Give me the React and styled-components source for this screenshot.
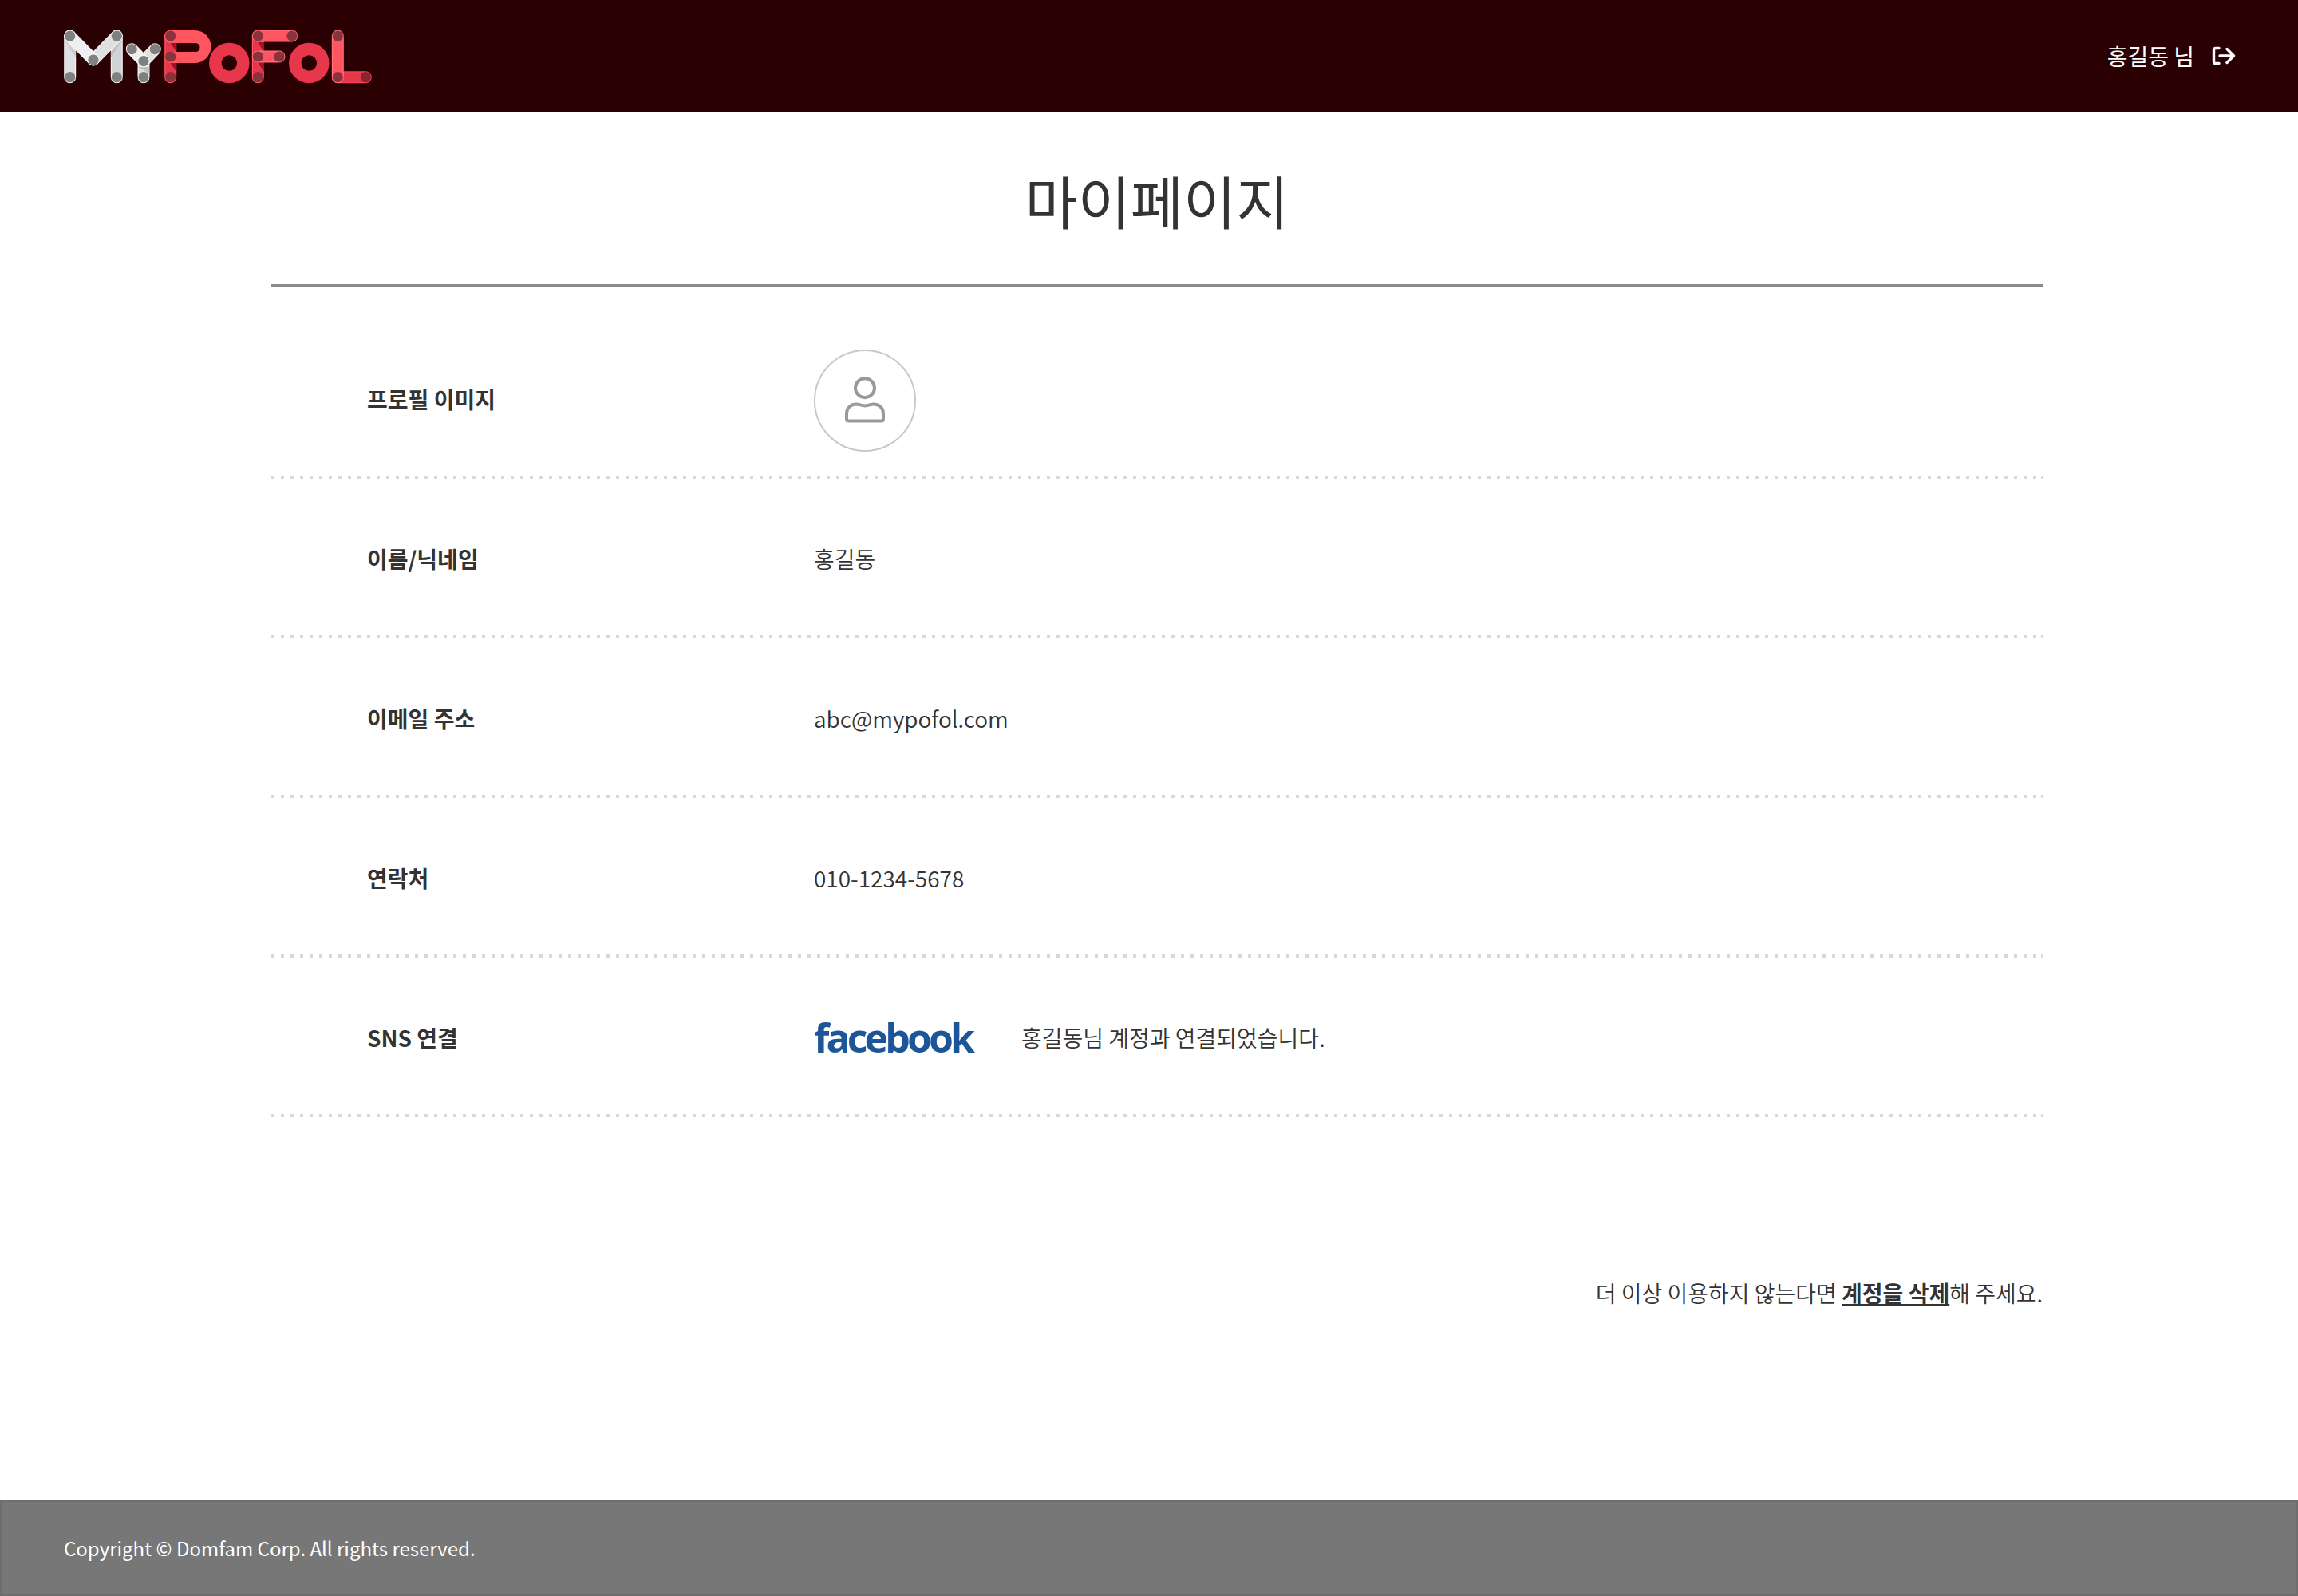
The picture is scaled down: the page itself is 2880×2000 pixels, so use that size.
import React from 'react'
import styled, { createGlobalStyle } from 'styled-components'

const GlobalStyle = createGlobalStyle`
  html, body {
    margin: 0;
    padding: 0;
    background: #fff;
  }
  body {
    font-family: "Noto Sans CJK KR", "Noto Sans", sans-serif;
    font-size: 28px;
    color: #333;
  }
`

const Page = styled.div`
  display: flex;
  flex-direction: column;
  min-height: 2000px;
`

const Header = styled.header`
  display: flex;
  align-items: center;
  justify-content: space-between;
  height: 140px;
  padding: 0 78px;
  box-sizing: border-box;
  background: #2b0002;
`

const UserBox = styled.div`
  display: flex;
  align-items: center;
  gap: 22px;
  color: #fff;
  font-weight: 400;
  line-height: 40px;
`

const Main = styled.main`
  flex: 1;
  padding: 0 320px 0 340px;
`

const Title = styled.h1`
  margin: 0;
  height: 216px;
  padding-top: 64px;
  box-sizing: border-box;
  text-align: center;
  font-size: 72px;
  font-weight: 400;
  line-height: 92px;
  color: #333;
`

const Rule = styled.div`
  height: 4px;
  background: #8c8c8c;
`

const List = styled.div`
  padding-top: 40px;
`

const Row = styled.div`
  display: flex;
  align-items: center;
  height: 200px;
  padding-left: 120px;
  box-sizing: border-box;
  background:
    linear-gradient(#d8d8d8, #d8d8d8) right bottom / 2px 4px no-repeat,
    linear-gradient(to right, #d8d8d8 4px, transparent 4px) left bottom / 12px 4px repeat-x;
`

const Label = styled.div`
  width: 560px;
  font-weight: 700;
  color: #333;
`

const Value = styled.div`
  display: flex;
  align-items: center;
  font-weight: 350;
  color: #333;
`

const Avatar = styled.div`
  display: flex;
  align-items: center;
  justify-content: center;
  width: 128px;
  height: 128px;
  margin-top: 3px;
  box-sizing: border-box;
  border: 2px solid #c8c8c8;
  border-radius: 50%;
`

const FacebookMark = styled.span`
  width: 200px;
  margin-right: 60px;
  font-family: "Open Sans", sans-serif;
  font-size: 50px;
  font-weight: 700;
  line-height: 60px;
  letter-spacing: -3.9px;
  color: #1d5599;
`

const Leave = styled.p`
  margin: 200px 0 0;
  text-align: right;
  font-weight: 350;
  line-height: 40px;
`

const DeleteLink = styled.a`
  font-weight: 700;
  color: #333;
  text-decoration: underline;
`

const Footer = styled.footer`
  display: flex;
  align-items: center;
  height: 120px;
  padding: 0 0 2px 78px;
  box-sizing: border-box;
  border: 2px solid #6e6e6e;
  background: #777;
  color: #fff;
  font-size: 24px;
  font-weight: 400;
`

const Rod = ({ x1, y1, x2, y2, fill, edge }) => (
  <g strokeLinecap="round">
    <line x1={x1} y1={y1} x2={x2} y2={y2} stroke={edge} strokeWidth="15" />
    <line x1={x1} y1={y1} x2={x2} y2={y2} stroke={fill} strokeWidth="12.5" />
  </g>
)

const Pins = ({ points, fill, r = 6.6 }) => (
  <g fill={fill}>
    {points.map(([cx, cy]) => (
      <circle key={`${cx}-${cy}`} cx={cx} cy={cy} r={r} />
    ))}
  </g>
)

const Ring = ({ cx }) => (
  <circle cx={cx} cy="79" r="17.5" fill="none" stroke="#e8364a" strokeWidth="15.5" />
)

const Logo = () => (
  <svg width="392" height="70" viewBox="78 35 392 70" role="img" aria-label="MyPoFoL">
    {/* M */}
    <Rod x1={87.7} y1={45} x2={87.7} y2={96.7} fill="#dfe0e2" edge="#f4f4f5" />
    <Rod x1={146.3} y1={45} x2={146.3} y2={96.7} fill="#d2d3d5" edge="#f0f0f1" />
    <polygon points="80.5,50 95,65 95,72" fill="#c9cacc" />
    <polygon points="153.5,50 139,65 139,72" fill="#bfc0c2" />
    <Rod x1={146.3} y1={45} x2={117} y2={75} fill="#dfe0e2" edge="#f0f0f1" />
    <Rod x1={87.7} y1={45} x2={117} y2={75} fill="#eeeff1" edge="#f8f8f9" />
    <Pins fill="#808080" points={[[87.7, 45], [146.3, 45], [117, 75], [87.7, 96.7], [146.3, 96.7]]} />
    {/* y */}
    <Rod x1={180} y1={76.7} x2={180} y2={96.7} fill="#dfe0e2" edge="#f0f0f1" />
    <polygon points="173,84 187,84 187,92" fill="#bfc0c2" />
    <Rod x1={194.3} y1={61.7} x2={180} y2={76.7} fill="#dfe0e2" edge="#f0f0f1" />
    <Rod x1={165.3} y1={61.7} x2={180} y2={76.7} fill="#eeeff1" edge="#f8f8f9" />
    <Pins fill="#808080" points={[[165.3, 61.7], [194.3, 61.7], [180, 76.7], [180, 96.7]]} />
    {/* P */}
    <Rod x1={213.7} y1={45} x2={213.7} y2={96.7} fill="#e8364a" edge="#ff5560" />
    <polygon points="213,53 221,53 221,65" fill="#a50f28" />
    <polygon points="213,78 221,78 221,90" fill="#a50f28" />
    <path
      d="M213.7 38 H244 a20.5 20.5 0 0 1 0 41 H213.7 a7 7 0 0 1 0 -14 H245 a5.5 5.5 0 0 0 0 -11 H213.7 a8 8 0 0 1 0 -16 z"
      fill="#ff5560"
    />
    <Pins fill="#8a333c" points={[[213.7, 45], [213.7, 71], [213.7, 96.7]]} />
    {/* o */}
    <Ring cx={287.3} />
    {/* F */}
    <Rod x1={323.3} y1={45} x2={323.3} y2={96.7} fill="#e8364a" edge="#ff5560" />
    <polygon points="323,53 331,53 331,65" fill="#a50f28" />
    <polygon points="323,78 331,78 331,90" fill="#a50f28" />
    <Rod x1={323.3} y1={45} x2={366} y2={45} fill="#ff5560" edge="#ff7078" />
    <Rod x1={323.3} y1={71} x2={350} y2={71} fill="#ff5560" edge="#ff7078" />
    <Pins fill="#8a333c" points={[[323.3, 45], [366, 45], [323.3, 71], [350, 71], [323.3, 96.7]]} />
    {/* o */}
    <Ring cx={387.3} />
    {/* L */}
    <Rod x1={423.3} y1={96.7} x2={458.3} y2={96.7} fill="#e8364a" edge="#ee4455" />
    <Rod x1={423.3} y1={45} x2={423.3} y2={96.7} fill="#ff5560" edge="#ff7078" />
    <Pins fill="#8a333c" points={[[423.3, 45], [423.3, 96.7]]} />
    <Pins fill="#85252f" points={[[458.3, 96.7]]} />
  </svg>
)

const LogoutIcon = () => (
  <svg width="30" height="24" viewBox="0 0 30 24" fill="none" stroke="#fff" strokeWidth="3.4" strokeLinecap="round" strokeLinejoin="round">
    <path d="M9 2.5H4.5a2 2 0 0 0-2 2v15a2 2 0 0 0 2 2H9" />
    <path d="M10 12h17M19 3.5l8.5 8.5-8.5 8.5" />
  </svg>
)

const PersonIcon = () => (
  <svg width="56" height="60" viewBox="0 0 56 60" fill="none" stroke="#999" strokeWidth="4" strokeLinejoin="round">
    <circle cx="28" cy="14.2" r="12" />
    <path d="M5 53v-7C5 39.500 10 34.500 17 34.500c4 0 6.500 2 11 2s7-2 11-2C46 34.500 51 39.500 51 46v7c0 1.500-1 2.500-2.500 2.500h-41C6 55.500 5 54.500 5 53z" />
  </svg>
)

const rows = [
  { label: '이름/닉네임', value: '홍길동' },
  { label: '이메일 주소', value: 'abc@mypofol.com' },
  { label: '연락처', value: '010-1234-5678' },
]

export default function App() {
  return (
    <Page>
      <GlobalStyle />
      <Header>
        <Logo />
        <UserBox>
          <span>홍길동 님</span>
          <LogoutIcon />
        </UserBox>
      </Header>
      <Main>
        <Title>마이페이지</Title>
        <Rule />
        <List>
          <Row>
            <Label>프로필 이미지</Label>
            <Avatar>
              <PersonIcon />
            </Avatar>
          </Row>
          {rows.map((row) => (
            <Row key={row.label}>
              <Label>{row.label}</Label>
              <Value>{row.value}</Value>
            </Row>
          ))}
          <Row>
            <Label>SNS 연결</Label>
            <Value>
              <FacebookMark>facebook</FacebookMark>
              홍길동님 계정과 연결되었습니다.
            </Value>
          </Row>
        </List>
        <Leave>
          더 이상 이용하지 않는다면 <DeleteLink>계정을 삭제</DeleteLink>해 주세요.
        </Leave>
      </Main>
      <Footer>Copyright © Domfam Corp. All rights reserved.</Footer>
    </Page>
  )
}
